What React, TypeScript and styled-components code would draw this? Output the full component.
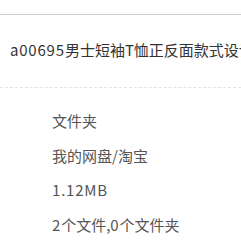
import React from "react";
import styled, { createGlobalStyle } from "styled-components";

const Global = createGlobalStyle`
  html, body { margin: 0; padding: 0; background: #fff; }
  body { font-family: "Noto Sans CJK SC", "Noto Sans", sans-serif; }
`;

const Page = styled.div`
  width: 241px;
  height: 241px;
  overflow: hidden;
  padding-top: 14px;
  box-sizing: border-box;
`;

const Header = styled.div`
  border-top: 1px solid #cfcfcf;
  border-bottom: 1px dashed #e3e3e3;
  height: 72px;
  display: flex;
  align-items: center;
  padding-left: 10px;
  white-space: nowrap;
  overflow: hidden;
`;

const Title = styled.div`
  font-size: 15px;
  color: #333;
  line-height: 20px;
  margin-top: -2px;
`;

const Latin = styled.span`
  letter-spacing: 0.8px;
`;

const List = styled.div`
  display: flex;
  flex-direction: column;
  padding: 23px 0 0 52px;
  gap: 14.5px;
`;

const Item = styled.div`
  font-size: 15px;
  color: #555;
  line-height: 20px;
  white-space: nowrap;
`;

export default function App() {
  return (
    <Page>
      <Global />
      <Header>
        <Title>
          <Latin>a00695</Latin>男士短袖T恤正反面款式设计
        </Title>
      </Header>
      <List>
        <Item>文件夹</Item>
        <Item>我的网盘/淘宝</Item>
        <Item>
          <Latin>1.12MB</Latin>
        </Item>
        <Item>
          <Latin>2</Latin>个文件,<Latin>0</Latin>个文件夹
        </Item>
      </List>
    </Page>
  );
}
